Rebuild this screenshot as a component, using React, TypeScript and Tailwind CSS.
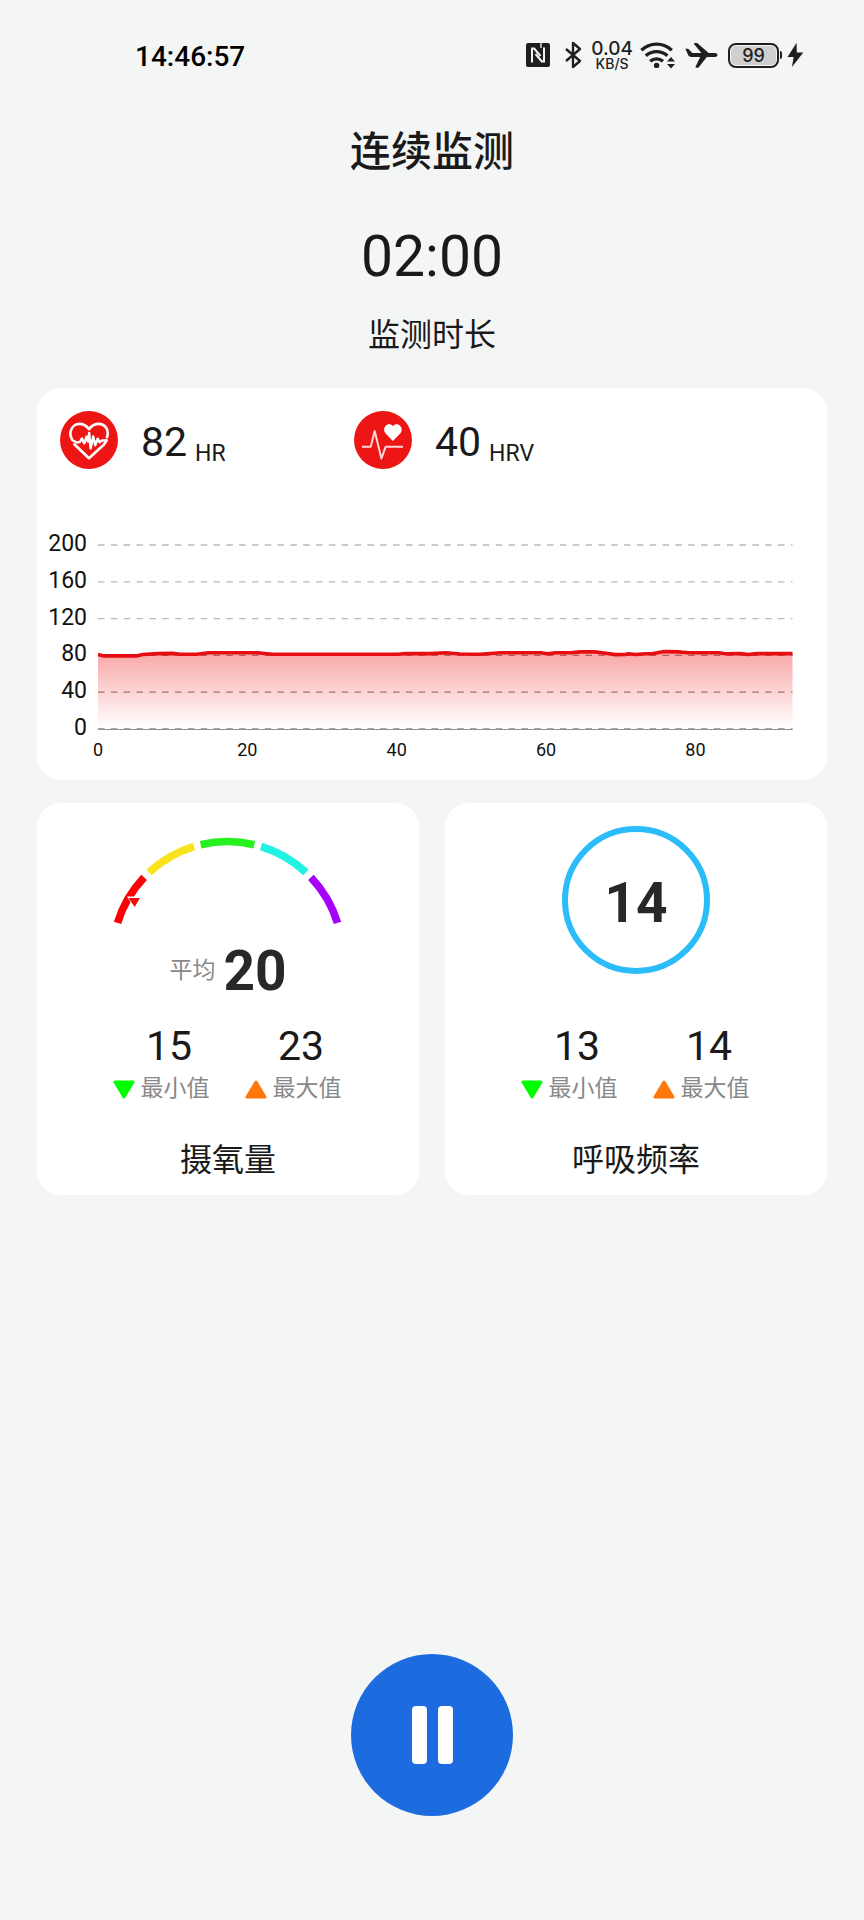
import type { ReactNode } from 'react'

const RED = '#ee1515'

const Y_TICKS = [200, 160, 120, 80, 40, 0]
const X_TICKS = [0, 20, 40, 60, 80]

// plot area inside the 790x290 chart box
const LEFT = 61
const RIGHT = 755.5
const BASE = 239
const TOP = 55

// [seconds, bpm]
const HEART_RATE: [number, number][] = [
  [0, 81], [0.8, 79.5], [5.1, 79.5], [6, 81], [8, 82], [10, 82.2], [11, 81.2], [13.2, 81.2],
  [14.8, 82.8], [21.3, 82.8], [23.3, 81.2], [40.2, 81.2], [41.2, 82], [44.5, 82], [46.5, 82.8],
  [48.5, 81.5], [51.2, 81.2], [53.9, 82.8], [59.3, 82.8], [60.2, 81.7], [61.3, 82.8], [63.3, 82.8],
  [64.6, 83.8], [66.5, 83.8], [68, 82.4], [69.3, 80.9], [70.6, 81], [71, 81.9], [72, 81],
  [73.3, 81.9], [74.2, 81.9], [75.8, 84.1], [77.7, 83.8], [79, 82.9], [83.1, 82.9], [84, 81.8],
  [86, 82], [87.1, 81], [88.2, 82], [93, 82],
]

const toX = (s: number) => LEFT + (s * (RIGHT - LEFT)) / 93
const toY = (bpm: number) => BASE - (bpm * (BASE - TOP)) / 200

function StatusBar() {
  return (
    <header className="flex h-[113px] items-center justify-between pr-[60px] pl-[135px] text-[#1f1f1f]">
      <time className="text-[28px] leading-8 font-medium text-black">14:46:57</time>
      <div className="flex items-center pb-[3px]">
        <svg width="24" height="24" viewBox="0 0 24 24" aria-hidden="true">
          <rect width="24" height="24" rx="2" fill="currentColor" />
          <path
            d="M6 19.500V5.500h2.200l6.300 7.500M18 4.500v14h-2.200L9.500 11"
            fill="none"
            stroke="#f4f6f6"
            strokeWidth="2"
          />
          <path d="M15 0v5" stroke="#f4f6f6" strokeWidth="1.300" />
        </svg>
        <svg className="ml-[14px]" width="18" height="28" viewBox="0 0 18 28" aria-hidden="true">
          <path
            d="M2 8l14 12-7 6V2l7 6L2 20"
            fill="none"
            stroke="currentColor"
            strokeWidth="2.400"
            strokeLinejoin="round"
          />
        </svg>
        <div className="ml-[9px] flex flex-col items-center font-[Inter]">
          <span className="text-[19px] leading-[17px] font-medium">0.04</span>
          <span className="text-[14px] leading-[14px] font-medium">KB/S</span>
        </div>
        <svg className="ml-[7px]" width="36" height="28" viewBox="0 0 36 28" aria-hidden="true">
          <g fill="none" stroke="currentColor" strokeWidth="3.400">
            <path d="M1.400 9.200a22 22 0 0 1 30.400 0" />
            <path d="M5.800 14.800a16 16 0 0 1 21.600 0" />
            <path d="M10.200 20.200a10 10 0 0 1 12.800 0" />
          </g>
          <circle cx="16.600" cy="24.400" r="2.700" fill="currentColor" />
          <path d="M27 20.500l4-4.500 4 4.500zM27 23l4 4.500 4-4.500z" fill="currentColor" />
        </svg>
        <svg className="ml-[9px]" width="33" height="28" viewBox="0 0 33 28" aria-hidden="true">
          <path
            d="M.3 7.800h2.800l4.400 4.200h8.900L9.400 3.400c-.6-.8-.4-1.500.4-1.500h2.400L23.600 12h6.400c1.500 0 2.500.8 2.500 2s-1 2-2.500 2h-8.200l-7.600 9.800c-.5.7-1 1-1.700 1h-1.300c-.7 0-.9-.5-.6-1.200L15.200 16H6.400c-1.500 0-2.400-.5-3.100-1.700z"
            fill="currentColor"
          />
        </svg>
        <div className="ml-[10px] flex items-center">
          <div className="h-[25px] w-[51px] rounded-lg border-2 border-current p-px">
            <div className="flex h-full items-center justify-center rounded-[5px] bg-[#cfcfcf] pt-px font-[Inter] text-[18px] leading-none font-medium">
              99
            </div>
          </div>
          <div className="ml-px h-2 w-[2px] rounded-r bg-current" />
        </div>
        <svg className="ml-[5px]" width="17" height="26" viewBox="0 0 17 26" aria-hidden="true">
          <path d="M9.600.8L.5 15h6.100L5 25 16.300 10.400H9.800z" fill="currentColor" />
        </svg>
      </div>
    </header>
  )
}

function HeartRateIcon() {
  return (
    <svg width="58" height="58" viewBox="0 0 58 58" aria-hidden="true">
      <circle cx="29" cy="29" r="29" fill={RED} />
      <g fill="none" stroke="#fff" strokeLinecap="round" strokeLinejoin="round">
        <path
          d="M12 28.500c-1.300-2.600-2-5-1.600-7.400 1-5 4.600-8.200 8.700-8.200 4.200 0 7.600 2 9.900 5.300 2.300-3.300 5.600-5.300 9.800-5.300 5.200 0 8.900 4 8.900 9 0 1.600-.2 3-.7 4.300M14.300 33.300L29 47.300l14.500-13.300 3-4.300"
          strokeWidth="2.600"
        />
        <path
          d="M12.500 29.300l4.300 2.200 3.200-.6 2-3.500 2.300 5 2.200-6.800 1.500 5L29.200 22l1.400 15.500 2.600-12 2 8.800 2.500-6.600 2 3.600 2.300-1.800 4.500-.2"
          strokeWidth="2.400"
        />
      </g>
    </svg>
  )
}

function HrvIcon() {
  return (
    <svg width="58" height="58" viewBox="0 0 58 58" aria-hidden="true">
      <circle cx="29" cy="29" r="29" fill={RED} />
      <path
        d="M8 35.700h8.700L20.700 20l6.700 27.500 4.300-11.800H49"
        fill="none"
        stroke="#ffd9d9"
        strokeWidth="2"
        strokeLinejoin="round"
      />
      <path
        d="M38.900 30l-7.300-7.400c-2-2.200-2-5.400-.1-7.600 2-2.300 5.600-2.300 7.400.2 1.800-2.500 5.400-2.500 7.400-.2 1.900 2.200 1.900 5.400-.1 7.600z"
        fill="#fff"
      />
    </svg>
  )
}

function Metric({ icon, value, unit }: { icon: ReactNode; value: number; unit: string }) {
  return (
    <div className="flex items-center gap-[23px]">
      {icon}
      <div className="mt-1 flex items-end gap-2">
        <span className="text-[41px] leading-[46px]">{value}</span>
        <span className="text-[23px] leading-[23px]">{unit}</span>
      </div>
    </div>
  )
}

function HeartRateChart() {
  const line = HEART_RATE.map(([s, bpm]) => `${toX(s).toFixed(1)},${toY(bpm).toFixed(1)}`).join(' ')

  return (
    <svg className="mt-[21px] block w-full" viewBox="0 0 790 290" role="img" aria-label="HR">
      <defs>
        <linearGradient id="hr-fill" x1="0" y1="0" x2="0" y2="1">
          <stop offset="0" stopColor={RED} stopOpacity="0.38" />
          <stop offset="1" stopColor={RED} stopOpacity="0" />
        </linearGradient>
      </defs>
      {Y_TICKS.map((tick) => (
        <g key={tick}>
          <text x="50" y={toY(tick) + 6} textAnchor="end" fontSize="23" fill="#111">
            {tick}
          </text>
          <line
            x1={LEFT}
            x2={RIGHT}
            y1={toY(tick)}
            y2={toY(tick)}
            stroke={tick > 80 ? '#b9b9b9' : '#8a8a8a'}
            strokeWidth="1.300"
            strokeDasharray="6.500 6.330"
          />
        </g>
      ))}
      <line x1={LEFT} x2={RIGHT} y1={BASE + 0.5} y2={BASE + 0.5} stroke="#8f8f8f" />
      <polygon points={`${LEFT},${BASE} ${line} ${RIGHT},${BASE}`} fill="url(#hr-fill)" />
      <polyline points={line} fill="none" stroke="#e60e12" strokeWidth="3.600" strokeLinejoin="round" />
      {X_TICKS.map((tick) => (
        <text key={tick} x={toX(tick)} y="266" textAnchor="middle" fontSize="18" fill="#111">
          {tick}
        </text>
      ))}
    </svg>
  )
}

const GAUGE = [
  { from: 163, to: 136.5, color: '#fb0207' },
  { from: 133, to: 107, color: '#f8e31c' },
  { from: 103.5, to: 76.5, color: '#27f01f' },
  { from: 73, to: 47, color: '#20f2e4' },
  { from: 43.5, to: 17, color: '#a602fb' },
]

function arc(from: number, to: number) {
  const point = (deg: number) => {
    const rad = (deg * Math.PI) / 180
    return `${(119.5 + 115 * Math.cos(rad)).toFixed(1)} ${(130.5 - 115 * Math.sin(rad)).toFixed(1)}`
  }
  return `M${point(from)}A115 115 0 0 1 ${point(to)}`
}

function OxygenDial() {
  return (
    <div className="flex flex-col items-center">
      <svg width="240" height="110" viewBox="0 0 240 110" aria-hidden="true">
        {GAUGE.map((part) => (
          <path key={part.color} d={arc(part.from, part.to)} fill="none" stroke={part.color} strokeWidth="7.700" />
        ))}
        <path d="M19 70.500h15.500l-8 12z" fill="#fff" />
        <path d="M20.500 72h11.500l-5.300 9z" fill="#f00d12" />
      </svg>
      <div className="mt-[6px] flex items-center gap-2">
        <span className="text-[23px] leading-7 text-[#888]">平均</span>
        <span className="text-[55px] leading-[58px] font-bold text-[#282828]">20</span>
      </div>
    </div>
  )
}

function BreathDial() {
  return (
    <div className="flex size-[148px] items-center justify-center rounded-full border-6 border-[#2cbcf9] pt-[6px]">
      <span className="text-[55px] leading-[56px] font-bold text-[#282828]">14</span>
    </div>
  )
}

function Extreme({ kind, value }: { kind: 'min' | 'max'; value: number }) {
  const min = kind === 'min'
  return (
    <div className="flex flex-col items-center">
      <span className="pl-4 text-[41px] leading-[42px]">{value}</span>
      <span className="mt-2 flex items-center gap-[6px] text-[23px] leading-7 text-[#888]">
        <svg width="22" height="19" viewBox="0 0 22 19" aria-hidden="true">
          <path
            d={min ? 'M2 2h18l-9 15z' : 'M2 17h18L11 2z'}
            fill={min ? '#0f0' : '#ff770b'}
            stroke={min ? '#0f0' : '#ff770b'}
            strokeWidth="3"
            strokeLinejoin="round"
          />
        </svg>
        {min ? '最小值' : '最大值'}
      </span>
    </div>
  )
}

function StatCard({ title, min, max, children }: { title: string; min: number; max: number; children: ReactNode }) {
  return (
    <section className="flex flex-col items-center rounded-3xl bg-white pt-[23px] pb-[15px]">
      <div className="h-[184px]">{children}</div>
      <div className="mt-[15px] flex gap-[35px] pr-[2px]">
        <Extreme kind="min" value={min} />
        <Extreme kind="max" value={max} />
      </div>
      <h2 className="mt-[37px] text-[32px] leading-10">{title}</h2>
    </section>
  )
}

export default function App() {
  return (
    <div className="flex min-h-screen flex-col bg-[#f4f6f6] font-[Roboto,'Noto_Sans_CJK_SC',sans-serif] text-[#1a1a1a]">
      <StatusBar />
      <main className="flex flex-1 flex-col px-[37px] pb-[104px]">
        <div className="text-center">
          <h1 className="mt-[7px] text-[41px] leading-[64px] font-medium">连续监测</h1>
          <p className="mt-[41px] text-[57px] leading-16">02:00</p>
          <p className="mt-[26px] text-[32px] leading-10">监测时长</p>
        </div>

        <section className="mt-[33px] overflow-hidden rounded-3xl bg-white pt-[23px]">
          <div className="grid grid-cols-[2fr_3fr] pr-8 pl-[23px]">
            <Metric icon={<HeartRateIcon />} value={82} unit="HR" />
            <Metric icon={<HrvIcon />} value={40} unit="HRV" />
          </div>
          <HeartRateChart />
        </section>

        <div className="mt-[23px] grid grid-cols-2 gap-[26px]">
          <StatCard title="摄氧量" min={15} max={23}>
            <OxygenDial />
          </StatCard>
          <StatCard title="呼吸频率" min={13} max={14}>
            <BreathDial />
          </StatCard>
        </div>

        <button
          type="button"
          aria-label="暂停"
          className="mx-auto mt-auto flex size-[162px] items-center justify-center gap-[11px] rounded-full bg-[#1c6cdf]"
        >
          <span className="h-[58px] w-[15px] rounded bg-white" />
          <span className="h-[58px] w-[15px] rounded bg-white" />
        </button>
      </main>
    </div>
  )
}
